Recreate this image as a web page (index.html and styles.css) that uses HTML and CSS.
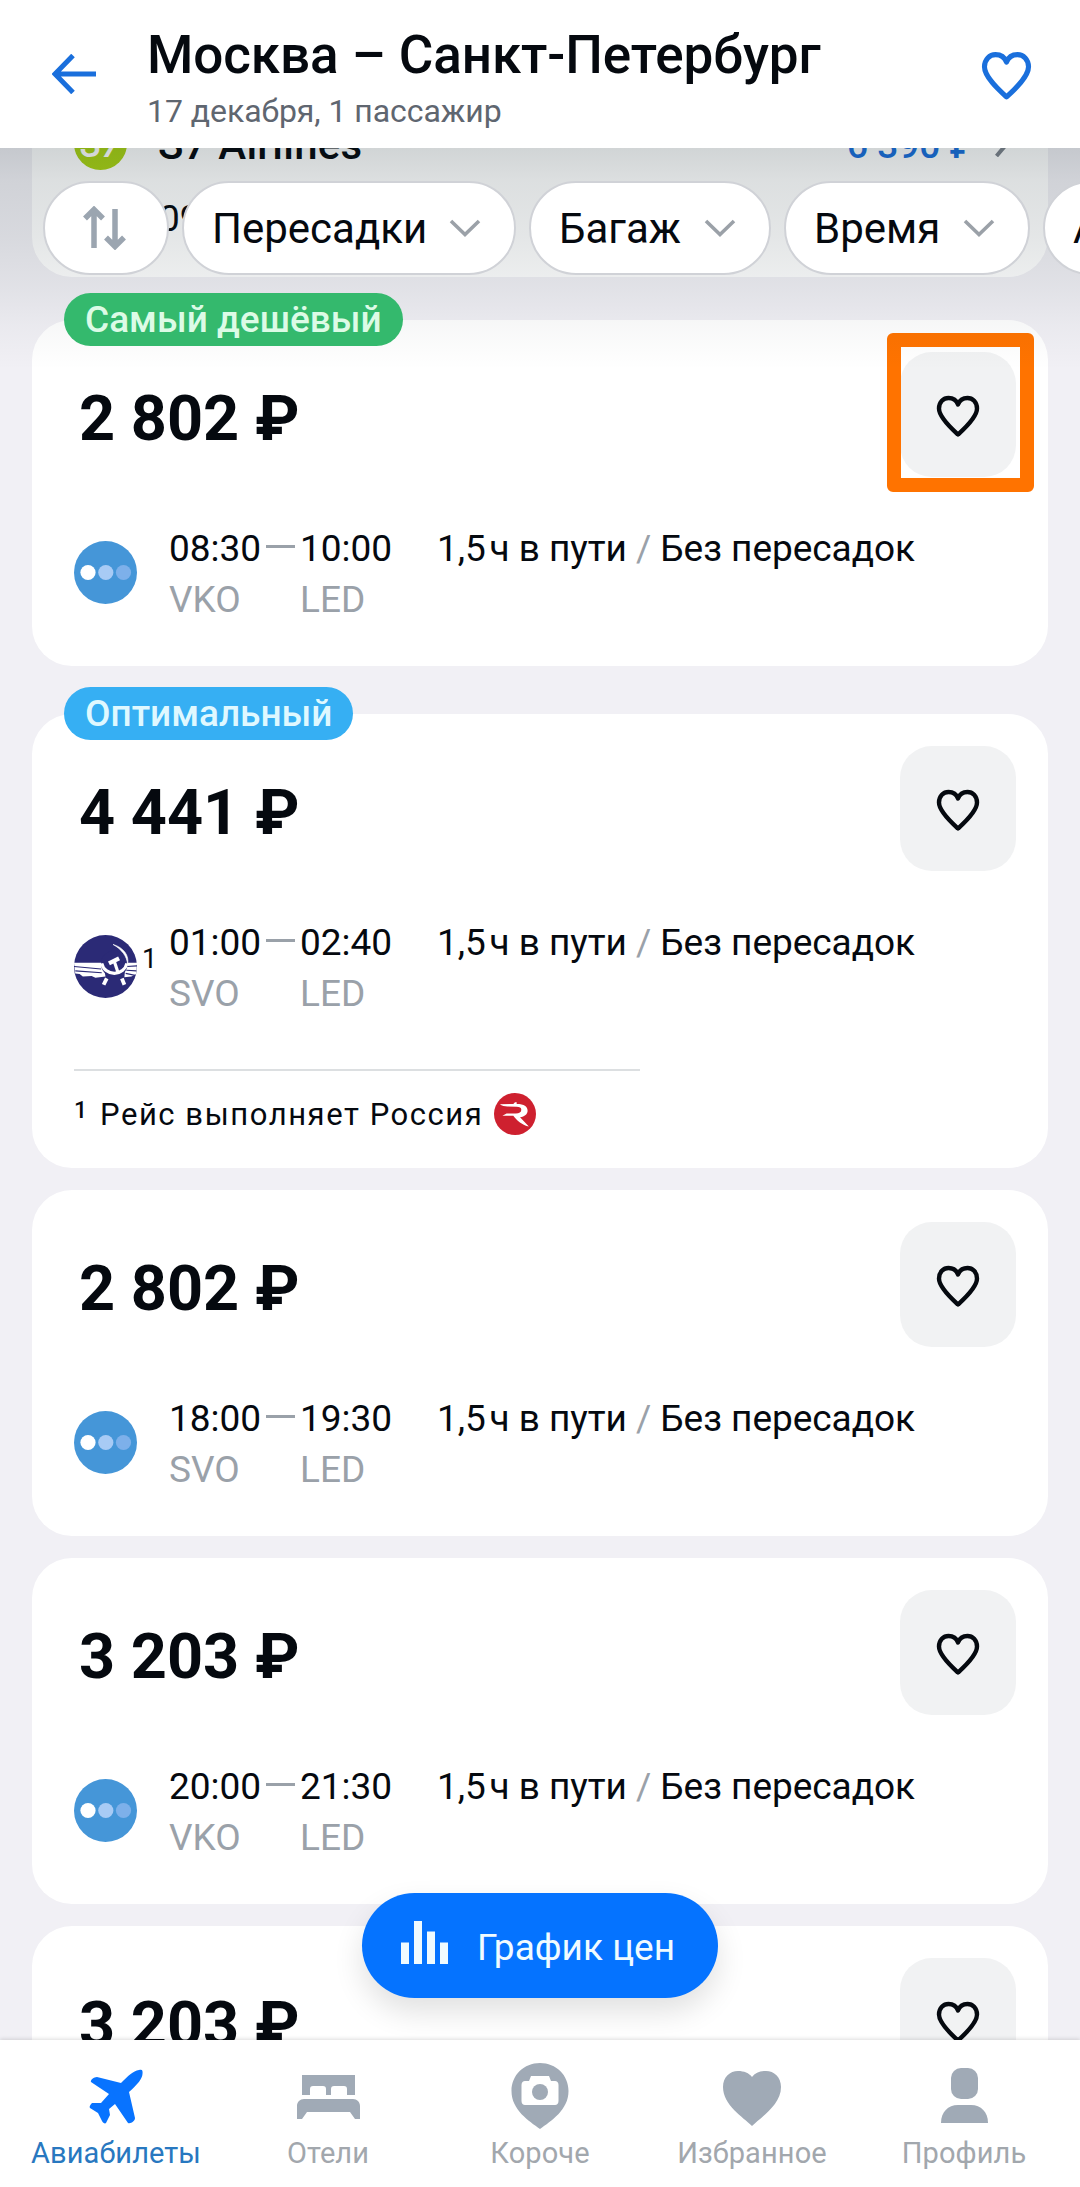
FILE: index.html
```html
<!DOCTYPE html>
<html lang="ru">
<head>
    <meta charset="UTF-8">
    <meta name="viewport" content="width=device-width, initial-scale=1.0">
    <title>Москва – Санкт-Петербург</title>
    <link rel="stylesheet" href="styles.css">
</head>
<body>

    <!-- Shared icons -->
    <svg class="sprite" width="0" height="0">
        <symbol id="heart" viewBox="0 0 44 42">
            <path d="M22 39.500C16 34 3 22.500 3 13.500C3 7 7.500 3 12.500 3C17 3 20.500 5.500 22 9.500C23.500 5.500 27 3 31.500 3C36.500 3 41 7 41 13.500C41 22.500 28 34 22 39.500Z" fill="none" stroke="currentColor" stroke-width="4.400" stroke-linejoin="round"/>
        </symbol>
        <symbol id="chevron" viewBox="0 0 32 18">
            <path d="M2 2L16 15.500L30 2" fill="none" stroke="currentColor" stroke-width="3.600"/>
        </symbol>
        <symbol id="pobeda" viewBox="0 0 63 63">
            <circle cx="31.500" cy="31.500" r="31.500" fill="#4596d8"/>
            <circle cx="14" cy="31.500" r="7.600" fill="#fff"/>
            <circle cx="31.800" cy="31.500" r="7.600" fill="#a8cbf5"/>
            <circle cx="49.500" cy="31.500" r="7.600" fill="#7db0ea"/>
        </symbol>
    </svg>

    <!-- Header -->
    <header class="header">
        <svg class="back-icon" viewBox="0 0 44 40"><path d="M21 1.500L3 20L21 38.500M3 20H44" fill="none" stroke="currentColor" stroke-width="5"/></svg>
        <div class="header-text">
            <h1>Москва – Санкт-Петербург</h1>
            <p>17 декабря, 1 пассажир</p>
        </div>
        <svg class="header-heart"><use href="#heart"/></svg>
    </header>

    <!-- Search results -->
    <main class="results">
        <section class="card card-airline">
            <div class="airline-row">
                <span class="s7-logo">S7</span>
                <span class="airline-name">S7 Airlines</span>
                <span class="airline-price">6 390 ₽</span>
                <svg class="airline-arrow" viewBox="0 0 12 22"><path d="M1.500 1L10 11L1.500 21" fill="none" stroke="currentColor" stroke-width="4"/></svg>
            </div>
            <div class="airline-time">09</div>
        </section>

        <section class="card">
            <span class="badge badge-green">Самый дешёвый</span>
            <div class="card-top">
                <div class="price">2 802 ₽</div>
                <button class="fav highlighted"><svg><use href="#heart"/></svg></button>
            </div>
            <div class="flight">
                <svg class="logo"><use href="#pobeda"/></svg>
                <div class="point"><span class="time">08:30</span><span class="code">VKO</span></div>
                <i class="dash"></i>
                <div class="point"><span class="time">10:00</span><span class="code">LED</span></div>
                <div class="info">1,5&#8202;ч в пути <i>/</i> Без пересадок</div>
            </div>
        </section>

        <section class="card card-noted">
            <span class="badge badge-blue">Оптимальный</span>
            <div class="card-top">
                <div class="price">4 441 ₽</div>
                <button class="fav"><svg><use href="#heart"/></svg></button>
            </div>
            <div class="flight">
                <svg class="logo" viewBox="0 0 100 100">
                    <circle cx="50" cy="50" r="50" fill="#2b2a76"/>
                    <path d="M0 44H46L50 66L34 68L28 65L14 66L9 62L2 61Z" fill="#fff"/>
                    <path d="M82 44H100L99 62L91 66L80 67Z" fill="#fff"/>
                    <path d="M0 50L43 54M2 57L44 60" stroke="#2b2a76" stroke-width="1.800"/>
                    <path d="M84 50L100 49M83 56L99 57M82 61L97 64" stroke="#2b2a76" stroke-width="1.800"/>
                    <circle cx="64" cy="46" r="21" fill="#2b2a76"/>
                    <path d="M44 45A20.500 20.500 0 0 0 84 45" fill="none" stroke="#fff" stroke-width="5"/>
                    <path d="M52 69L47 79M76 69L80 79" stroke="#fff" stroke-width="6"/>
                    <path d="M62 15C79 20 88 33 85 46C84 34 76 23 62 15Z" fill="#fff" stroke="#fff" stroke-width="1"/>
                    <path d="M54 42L70 34L73 40L57 48Z" fill="#fff"/>
                    <path d="M64 42L70 60" stroke="#fff" stroke-width="5"/>
                </svg>
                <sup class="note-mark">1</sup>
                <div class="point"><span class="time">01:00</span><span class="code">SVO</span></div>
                <i class="dash"></i>
                <div class="point"><span class="time">02:40</span><span class="code">LED</span></div>
                <div class="info">1,5&#8202;ч в пути <i>/</i> Без пересадок</div>
            </div>
            <div class="footnote-line"></div>
            <div class="footnote">
                <sup>1</sup>
                <span>Рейс выполняет Россия</span>
                <svg viewBox="0 0 100 100">
                    <circle cx="50" cy="50" r="50" fill="#ce202f"/>
                    <path d="M14 27L46 26L50 22L54 22L54 26C72 26 80 32 80 42C80 50 73 56 62 58L83 80C68 76 54 66 46 54H20L30 49H52C60 49 65 46 65 40C65 35 61 33 54 33L32 32C26 32 18 31 14 27Z" fill="#fff"/>
                </svg>
            </div>
        </section>

        <section class="card">
            <div class="card-top">
                <div class="price">2 802 ₽</div>
                <button class="fav"><svg><use href="#heart"/></svg></button>
            </div>
            <div class="flight">
                <svg class="logo"><use href="#pobeda"/></svg>
                <div class="point"><span class="time">18:00</span><span class="code">SVO</span></div>
                <i class="dash"></i>
                <div class="point"><span class="time">19:30</span><span class="code">LED</span></div>
                <div class="info">1,5&#8202;ч в пути <i>/</i> Без пересадок</div>
            </div>
        </section>

        <section class="card">
            <div class="card-top">
                <div class="price">3 203 ₽</div>
                <button class="fav"><svg><use href="#heart"/></svg></button>
            </div>
            <div class="flight">
                <svg class="logo"><use href="#pobeda"/></svg>
                <div class="point"><span class="time">20:00</span><span class="code">VKO</span></div>
                <i class="dash"></i>
                <div class="point"><span class="time">21:30</span><span class="code">LED</span></div>
                <div class="info">1,5&#8202;ч в пути <i>/</i> Без пересадок</div>
            </div>
        </section>

        <section class="card">
            <div class="card-top">
                <div class="price">3 203 ₽</div>
                <button class="fav"><svg><use href="#heart"/></svg></button>
            </div>
        </section>

        <!-- Filters float over the list -->
        <div class="filters">
            <button class="pill pill-sort">
                <svg viewBox="0 0 44 44"><path d="M11 42V5M2 12.500L11 3.500L20 12.500M32 3V39M23 31.500L32 40.500L41 31.500" fill="none" stroke="currentColor" stroke-width="5.500"/></svg>
            </button>
            <button class="pill pill-stops">Пересадки<svg class="chevron"><use href="#chevron"/></svg></button>
            <button class="pill pill-bags">Багаж<svg class="chevron"><use href="#chevron"/></svg></button>
            <button class="pill pill-time">Время<svg class="chevron"><use href="#chevron"/></svg></button>
            <button class="pill pill-more">А</button>
        </div>

        <button class="chart-btn">
            <svg viewBox="0 0 47 43"><path d="M0 21.500H8V43H0ZM13 0H21V43H13ZM26 10.500H34V43H26ZM39 21.500H47V43H39Z" fill="currentColor"/></svg>
            График цен
        </button>
    </main>

    <!-- Tab bar -->
    <nav class="tabs">
        <a class="tab active">
            <svg viewBox="0 0 66 66"><path d="M56 7C59 6 60 7 59.500 11C59 16 55 21 46 29L52 55C52 58 48 61 45 60L32 41L26 46L27 52L23 60C22 61 20 60 19 58L15 50L7 45C6 44 7 42 9 40L18 40L26 31L8 19C7 17 11 14 14 14L38 20C45 13 50 8 56 7Z" fill="currentColor"/></svg>
            <span>Авиабилеты</span>
        </a>
        <a class="tab">
            <svg viewBox="0 0 66 66"><path d="M7 12H60V32H52V26C52 24 51 23 49 23H39C37 23 36 24 36 26V32H31V26C31 24 30 23 28 23H18C16 23 15 24 15 26V32H7ZM9 36H58C62 36 65 39 65 43V56H60L55 49H12L7 56H2V43C2 39 5 36 9 36Z" fill="currentColor"/></svg>
            <span>Отели</span>
        </a>
        <a class="tab">
            <svg viewBox="0 0 66 66"><path d="M33 0C17 0 4.500 12 4.500 28C4.500 47 22 58 33 66C44 58 61.500 47 61.500 28C61.500 12 49 0 33 0Z" fill="currentColor"/><path d="M18 18H22L24 13H42L44 18H48C50 18 51.500 19.500 51.500 22V38C51.500 40.500 50 42 48 42H18C16 42 14.500 40.500 14.500 38V22C14.500 19.500 16 18 18 18Z" fill="#fff"/><circle cx="33" cy="29" r="8" fill="currentColor"/></svg>
            <span>Короче</span>
        </a>
        <a class="tab">
            <svg viewBox="0 0 66 66"><path d="M33 63C24 54 4 42 4 24C4 14 11 8 19 8C25 8 30 10 33 14C36 10 41 8 47 8C55 8 62 14 62 24C62 42 42 54 33 63Z" fill="currentColor"/></svg>
            <span>Избранное</span>
        </a>
        <a class="tab">
            <svg viewBox="0 0 66 66"><rect x="20" y="5" width="27" height="31" rx="10" fill="currentColor"/><path d="M10 60C10 49 17 42 27 42H40C50 42 57 49 57 60Z" fill="currentColor"/></svg>
            <span>Профиль</span>
        </a>
    </nav>

</body>
</html>
```

FILE: styles.css
```css
/* Global Styles */
*,
*::after {
    box-sizing: border-box;
}

body {
    margin: 0;
    width: 1080px;
    height: 2187px;
    display: flex;
    flex-direction: column;
    overflow: hidden;
    font-family: Roboto, "Liberation Sans", sans-serif;
    background-color: #f1f0f5;
    color: #05090f;
}

button {
    font-family: inherit;
    color: inherit;
    border: none;
    padding: 0;
    cursor: pointer;
}

svg {
    display: block;
    flex-shrink: 0;
}

.sprite {
    position: absolute;
}

/* Header */
.header {
    flex: 0 0 148px;
    display: flex;
    align-items: flex-start;
    padding: 0 48px 0 52px;
    background-color: #fff;
    color: #1a6fdc;
}

.back-icon {
    width: 44px;
    height: 40px;
    margin-top: 54px;
}

.header-text {
    flex: 1;
    padding: 25px 0 0 51px;
}

.header h1 {
    margin: 0;
    font-size: 53px;
    line-height: 61px;
    font-weight: 500;
    letter-spacing: -0.08px;
    color: #05090f;
    white-space: nowrap;
}

.header p {
    margin: 5px 0 0;
    font-size: 32px;
    line-height: 40px;
    letter-spacing: -0.05px;
    color: #5f6670;
}

.header-heart {
    width: 51px;
    height: 49px;
    margin-top: 51px;
}

/* Results list */
.results {
    position: relative;
    flex: 1;
    min-height: 0;
    overflow: hidden;
    padding: 0 32px;
}

.card {
    position: relative;
    background-color: #fff;
    border-radius: 40px;
    padding: 32px 32px 41px 42px;
    margin-bottom: 22px;
}

/* Cards with a badge need more room above */
.card:has(.badge) {
    margin-top: 48px;
}

.card-noted {
    padding-bottom: 33px;
}

.card-airline {
    display: flex;
    flex-direction: column;
    height: 129px;
    padding: 0 41px 0 42px;
    margin-bottom: 43px;
    border-radius: 0 0 40px 40px;
}

.card-airline + .card:has(.badge) {
    margin-top: 0;
}

.airline-row {
    flex-shrink: 0;
    display: flex;
    align-items: center;
    height: 54px;
    margin-top: -32px;
    font-size: 42px;
    font-weight: 500;
}

.s7-logo {
    width: 53px;
    height: 53px;
    border-radius: 50%;
    background-color: #a9d214;
    color: #fff;
    font-size: 36px;
    font-style: italic;
    line-height: 56px;
    text-align: center;
}

.airline-name {
    flex: 1;
    margin: 3px 0 0 31px;
    letter-spacing: 0.2px;
}

.airline-price {
    margin-top: 5px;
    font-size: 37px;
    color: #1a6fdc;
}

.airline-arrow {
    width: 12px;
    height: 22px;
    margin: 6px 0 0 20px;
    color: #7d838c;
}

.airline-time {
    margin: 28px 0 0 85px;
    font-size: 37px;
    line-height: 42px;
}

.badge {
    position: absolute;
    left: 32px;
    top: -27px;
    height: 53px;
    padding: 0 20px 0 21px;
    border-radius: 27px;
    font-size: 37px;
    line-height: 53px;
    font-weight: 500;
    white-space: nowrap;
    z-index: 2;
}

.badge-green {
    width: 339px;
    background-color: #34b96d;
    color: #dcfbe6;
}

.badge-blue {
    width: 289px;
    background-color: #36aff3;
    color: #dff8ff;
}

.card-top {
    display: flex;
    justify-content: space-between;
    align-items: center;
    height: 125px;
}

.price {
    margin: 9px 0 0 5px;
    font-size: 63px;
    line-height: 70px;
    font-weight: 700;
    white-space: nowrap;
}

.fav {
    position: relative;
    display: flex;
    justify-content: center;
    width: 116px;
    height: 125px;
    padding-top: 43px;
    border-radius: 32px;
    background-color: #f1f2f3;
}

.fav svg {
    width: 44px;
    height: 42px;
}

/* Frame around the button */
.highlighted::after {
    content: "";
    position: absolute;
    left: -13px;
    top: -19px;
    width: 147px;
    height: 159px;
    border: 14px solid #ff7300;
    border-radius: 6px;
}

/* Flight row */
.flight {
    display: grid;
    grid-template-columns: 95px 92px 39px 92px 1fr;
    grid-template-rows: 102px;
    position: relative;
    margin-top: 46px;
    font-size: 37px;
    line-height: 51px;
    white-space: nowrap;
}

.logo {
    width: 63px;
    height: 63px;
    margin-top: 18px;
}

.note-mark {
    position: absolute;
    left: 68px;
    top: 27px;
    font-size: 27px;
    line-height: 30px;
}

.point {
    display: flex;
    flex-direction: column;
}

.code {
    color: #9aa1a9;
}

.dash {
    width: 29px;
    height: 3px;
    margin: 22px 0 0 5px;
    background-color: #9aa1a9;
}

.info {
    margin-left: 45px;
    letter-spacing: -0.04px;
}

.info i {
    font-style: normal;
    color: #9aa1a9;
}

.footnote-line {
    width: 566px;
    height: 2px;
    margin-top: 50px;
    background-color: #dcdfe1;
}

.footnote {
    display: flex;
    height: 42px;
    margin-top: 22px;
    font-size: 31px;
    line-height: 43px;
}

.footnote sup {
    width: 26px;
    font-size: 23px;
    font-weight: 500;
    line-height: 35px;
}

.footnote span {
    width: 394px;
    letter-spacing: 1.55px;
    white-space: nowrap;
}

.footnote svg {
    width: 42px;
    height: 42px;
}

/* Filters */
.filters {
    position: absolute;
    left: 0;
    top: 0;
    width: 1080px;
    height: 222px;
    display: flex;
    gap: 13px;
    padding: 33px 0 0 43px;
    overflow: hidden;
    background: linear-gradient(rgba(10, 30, 36, 0.19), rgba(10, 30, 36, 0.14) 15%, rgba(10, 30, 36, 0.11) 40%, rgba(10, 30, 36, 0.07) 62%, rgba(10, 30, 36, 0.03) 80%, rgba(10, 30, 36, 0));
}

.pill {
    flex-shrink: 0;
    display: flex;
    justify-content: space-between;
    align-items: center;
    height: 94px;
    padding: 0 33px 0 28px;
    border: 2px solid #d0d2d7;
    border-radius: 47px;
    background-color: #fff;
    font-size: 42px;
}

.pill-sort {
    width: 126px;
    padding: 0 0 0 38px;
    color: #9ba5b0;
}

.pill-sort svg {
    width: 44px;
    height: 44px;
}

.pill-stops {
    width: 334px;
}

.pill-bags {
    width: 242px;
}

.pill-time {
    width: 246px;
}

.pill-more {
    width: 200px;
}

.chevron {
    width: 32px;
    height: 18px;
    color: #9ba1a8;
}

/* Price chart button */
.chart-btn {
    position: absolute;
    left: 362px;
    top: 1745px;
    width: 356px;
    height: 105px;
    display: flex;
    align-items: center;
    gap: 29px;
    padding: 3px 0 0 39px;
    border-radius: 53px;
    background-color: #0573ff;
    box-shadow: 0 14px 30px rgba(0, 0, 0, 0.12);
    color: #f0fbff;
    font-size: 37px;
    white-space: nowrap;
}

.chart-btn svg {
    width: 47px;
    height: 43px;
    margin-bottom: 9px;
}

/* Tab bar */
.tabs {
    flex: 0 0 147px;
    display: grid;
    grid-template-columns: repeat(5, 212px);
    padding-left: 10px;
    background-color: #fff;
    box-shadow: 0 -1px 4px rgba(0, 0, 0, 0.14);
    z-index: 3;
}

.tab {
    display: flex;
    flex-direction: column;
    align-items: center;
    padding-top: 23px;
    font-size: 29px;
    line-height: 40px;
    color: #a0aab6;
}

.tab span {
    margin-top: 4px;
    letter-spacing: 0.1px;
    color: #a2a7ad;
}

.tab svg {
    width: 66px;
    height: 66px;
}

.tab.active {
    color: #0873ff;
}

.tab.active span {
    color: #2878c0;
}
```
